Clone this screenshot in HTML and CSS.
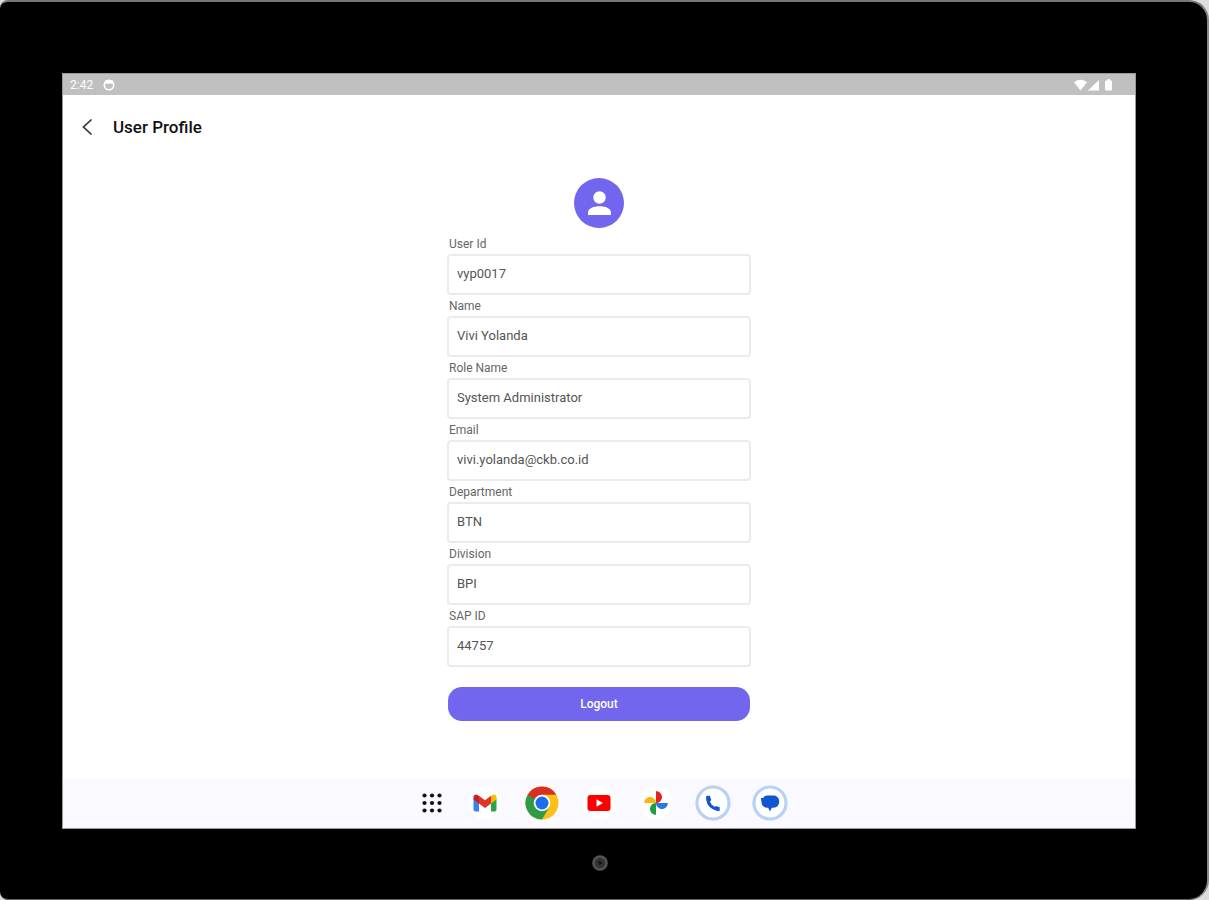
FILE: index.html
```html
<!DOCTYPE html>
<html lang="en">
<head>
<meta charset="utf-8">
<title>User Profile</title>
<link rel="stylesheet" href="styles.css">
</head>
<body>
<div class="device">
  <div class="screen">
    <div class="status">
      <span class="clock">2:42</span>
      <svg class="status-app" width="12" height="12" viewBox="0 0 12 12"><circle cx="6" cy="6" r="4.7" fill="none" stroke="#fff" stroke-width="1.6"/><path d="M2 1.5h8v3.2H2z" fill="#fff"/></svg>
      <svg class="signals" width="40" height="12" viewBox="0 0 40 12" fill="#fff"><path d="M0 3.2C3.5-.2 9.500-.2 13 3.200L6.500 11.500z"/><path d="M25 1v10.500H14z"/><path d="M31 2.500q0-1 1-1h1V.3h3v1.200h1q1 0 1 1v8q0 1-1 1h-5q-1 0-1-1z"/></svg>
    </div>
    <header class="topbar">
      <button class="back" type="button" aria-label="Back"><svg width="12" height="18" viewBox="0 0 12 18"><path d="M10.500 1.500 2.500 9l8 7.500" fill="none" stroke="#333" stroke-width="1.700"/></svg></button>
      <h1 class="title">User Profile</h1>
    </header>
    <main class="profile">
      <svg class="avatar" width="50" height="50" viewBox="0 0 50 50"><circle cx="25" cy="25" r="25" fill="#7265ee"/><circle cx="25.500" cy="19.500" r="6.200" fill="#fff"/><path d="M14 37v-2.500c0-4.300 6-6.300 11.500-6.300S37 30.200 37 34.500V37z" fill="#fff"/></svg>
      <form class="form">
        <label class="label" for="uid">User Id</label>
        <input class="input" id="uid" type="text" value="vyp0017" readonly>
        <label class="label" for="name">Name</label>
        <input class="input" id="name" type="text" value="Vivi Yolanda" readonly>
        <label class="label" for="role">Role Name</label>
        <input class="input" id="role" type="text" value="System Administrator" readonly>
        <label class="label" for="email">Email</label>
        <input class="input" id="email" type="text" value="vivi.yolanda@ckb.co.id" readonly>
        <label class="label" for="dept">Department</label>
        <input class="input" id="dept" type="text" value="BTN" readonly>
        <label class="label" for="div">Division</label>
        <input class="input" id="div" type="text" value="BPI" readonly>
        <label class="label" for="sap">SAP ID</label>
        <input class="input" id="sap" type="text" value="44757" readonly>
        <button class="logout" type="button">Logout</button>
      </form>
    </main>
    <nav class="dock" aria-label="Apps">
      <button class="app app-grid" type="button" aria-label="All apps"><svg width="22" height="22" viewBox="0 0 22 22" fill="#111"><circle cx="3.500" cy="3.500" r="2.100"/><circle cx="11" cy="3.500" r="2.100"/><circle cx="18.500" cy="3.500" r="2.100"/><circle cx="3.500" cy="11" r="2.100"/><circle cx="11" cy="11" r="2.100"/><circle cx="18.500" cy="11" r="2.100"/><circle cx="3.500" cy="18.500" r="2.100"/><circle cx="11" cy="18.500" r="2.100"/><circle cx="18.500" cy="18.500" r="2.100"/></svg></button>
      <button class="app" type="button" aria-label="Gmail"><svg width="34" height="34" viewBox="0 0 34 34"><circle cx="17" cy="17" r="16.500" fill="#fff"/><path d="M5.500 13v10.500c0 1 .7 1.900 1.700 1.900H11v-9.500z" fill="#3b7ff0"/><path d="M28.500 13v10.500c0 1-.7 1.900-1.700 1.900H23v-9.500z" fill="#2ba24c"/><path d="M23 10v7.500l5.500-4.100v-2.200c0-2.500-2.500-3.500-4.100-2.100z" fill="#fbbc04"/><path d="M11 17.500V9.700l6 4.600 6-4.600v7.800L17 22z" fill="#e23327"/><path d="M5.500 11.200v2.200l5.500 4.100V9.900l-1.400-.8c-1.600-1.400-4.100-.4-4.100 2.100z" fill="#c5221f"/></svg></button>
      <button class="app" type="button" aria-label="Chrome"><svg width="34" height="34" viewBox="0 0 34 34"><circle cx="17" cy="17" r="16.500" fill="#fbc116"/><path d="M2.710 8.750A16.500 16.500 0 0 0 17 33.500l7.140-12.370L17 17z" fill="#2d9b48"/><path d="M2.710 8.750A16.500 16.500 0 0 1 31.290 8.750H17L9.860 21.130z" fill="#d93025"/><path d="M2.710 8.750 9.860 21.130 17 17z" fill="#2d9b48"/><circle cx="17" cy="17" r="8.300" fill="#fff"/><circle cx="17" cy="17" r="6.500" fill="#1a6fe8"/></svg></button>
      <button class="app" type="button" aria-label="YouTube"><svg width="34" height="34" viewBox="0 0 34 34"><circle cx="17" cy="17" r="16.500" fill="#fff"/><rect x="5.500" y="9" width="23" height="16" rx="3" fill="#f00"/><path d="m14.500 13.300 6.500 3.700-6.500 3.700z" fill="#fff"/></svg></button>
      <button class="app" type="button" aria-label="Photos"><svg width="34" height="34" viewBox="0 0 34 34"><circle cx="17" cy="17" r="16.500" fill="#fff"/><path d="M17 5.200c3.600 0 6 2.700 6 6 0 2.800-2.400 5.800-6 5.800z" fill="#e0261f"/><path d="M28.800 17c0 3.600-2.700 6-6 6-2.800 0-5.800-2.400-5.800-6z" fill="#2677ea"/><path d="M17 28.800c-3.600 0-6-2.700-6-6 0-2.800 2.400-5.800 6-5.800z" fill="#1f9c46"/><path d="M5.200 17c0-3.600 2.700-6 6-6 2.800 0 5.800 2.400 5.800 6z" fill="#fbb414"/></svg></button>
      <button class="app" type="button" aria-label="Phone"><svg width="36" height="36" viewBox="0 0 36 36"><circle cx="18" cy="18" r="16" fill="#fff" stroke="#b9d0f7" stroke-width="3.200"/><path d="M13 12.500C12.500 19 16.500 23.500 23 24" fill="none" stroke="#1256cf" stroke-width="3"/><path d="M12.200 10.800h2.600l1.500 4.200-2 2.200-2.600-1.200c-.6-1.800-.6-3.600-.5-4.400.1-.5.500-.8 1-.8zM24.700 25.400v-3.200l-3.800-1.200-2 1.800.8 2.200c1.400.6 2.900.8 4.200.9.500 0 .8-.1.800-.5z" fill="#1256cf"/></svg></button>
      <button class="app" type="button" aria-label="Messages"><svg width="36" height="36" viewBox="0 0 36 36"><circle cx="18" cy="18" r="16" fill="#fff" stroke="#b9d0f7" stroke-width="3.200"/><path d="M15 10.500h6.500c3.300 0 5.700 2.500 5.700 6s-2.400 6.200-5.700 6.200h-1.700L18 26.500l-1.800-3.800H15c-3.300 0-5.500-2.500-5.500-5.700L8.800 13h2.400c.8-1.500 2.100-2.500 3.800-2.500z" fill="#1256cf"/></svg></button>
    </nav>
  </div>
  <div class="chin">
    <svg width="16" height="16" viewBox="0 0 16 16"><circle cx="8" cy="8" r="6.600" fill="#333" stroke="#555" stroke-width="2.400"/><path d="m6.500 5.500 4 2.500-3.500 2z" fill="#111"/></svg>
  </div>
</div>
</body>
</html>
```
FILE: styles.css
```css
* {
  box-sizing: border-box;
}

body {
  margin: 0;
  background: #ddd;
  font-family: Roboto, "Liberation Sans", sans-serif;
}

button {
  padding: 0;
  border: 0;
  background: none;
  font: inherit;
}

svg {
  display: block;
}

.device {
  display: flex;
  flex-direction: column;
  min-height: 100vh;
  padding: 71px 71px 0 62px;
  background: #000;
  border-top: 2px solid #777;
  border-right: 2px solid #888;
  border-bottom: 1px solid #666;
  border-radius: 8px 20px 20px 8px;
}

.screen {
  display: flex;
  flex: 1;
  flex-direction: column;
  border: 1px solid #999;
  background: #fff;
}

.status {
  display: flex;
  align-items: center;
  gap: 10px;
  height: 21px;
  padding: 0 21px 0 7px;
  background: #c0c0c0;
  color: #fff;
}

.clock {
  font-size: 12px;
  line-height: 20px;
}

.signals {
  margin-left: auto;
}

.topbar {
  display: flex;
  align-items: center;
  gap: 20px;
  height: 64px;
  padding: 0 18px;
}

.title {
  margin: 0;
  color: #111;
  font-size: 17px;
  font-weight: 500;
  line-height: 20px;
}

.profile {
  display: flex;
  flex: 1;
  flex-direction: column;
  align-items: center;
  padding: 19px 16px;
}

.form {
  display: flex;
  flex-direction: column;
  width: 100%;
  max-width: 304px;
  padding-top: 5px;
}

.label {
  height: 21px;
  padding: 4px 2px 3px;
  color: #666;
  font-size: 12px;
  line-height: 14px;
}

.input {
  width: 100%;
  height: 41px;
  padding: 0 8px 2px;
  border: 2px solid #ebebeb;
  border-radius: 4px;
  outline: 0;
  background: #fff;
  color: #555;
  font-family: inherit;
  font-size: 13px;
}

.logout {
  height: 34px;
  margin: 20px 1px 0;
  border-radius: 14px;
  background: #7265ee;
  color: #fff;
  font-size: 12px;
  font-weight: 500;
}

.dock {
  display: flex;
  align-items: center;
  justify-content: center;
  height: 49px;
  padding: 0 0 2px 8px;
  background: #f9f9ff;
}

.app {
  display: flex;
  align-items: center;
  justify-content: center;
  width: 57px;
  height: 40px;
}

.app-grid {
  width: 48px;
}

.chin {
  display: flex;
  align-items: center;
  justify-content: center;
  height: 70px;
  padding: 0 0 2px 2px;
}
```
